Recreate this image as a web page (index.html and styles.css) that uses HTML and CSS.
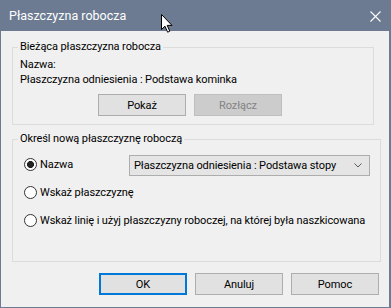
FILE: index.html
```html
<!DOCTYPE html>
<html lang="pl">

<head>
  <meta charset="UTF-8">
  <title>Płaszczyzna robocza</title>
  <link rel="stylesheet" href="styles.css">
</head>

<body>
  <div class="window">
    <div class="titlebar">
      <span class="title">Płaszczyzna robocza</span>
      <svg class="close" viewBox="0 0 11 11" fill="none" stroke="#fff" stroke-width="1.1">
        <path d="M0.5 0.5l10 10M10.5 0.5l-10 10" /></svg>
    </div>

    <div class="content">
      <fieldset class="group group-current">
        <legend>Bieżąca płaszczyzna robocza</legend>
        <div class="info">Nazwa:</div>
        <div class="info">Płaszczyzna odniesienia : Podstawa kominka</div>
        <div class="group-buttons">
          <button class="btn">Pokaż</button>
          <button class="btn" disabled>Rozłącz</button>
        </div>
      </fieldset>

      <fieldset class="group group-new">
        <legend>Określ nową płaszczyznę roboczą</legend>
        <div class="option-row">
          <label class="option"><input type="radio" name="mode" class="radio" checked>Nazwa</label>
          <div class="combo">
            <span>Płaszczyzna odniesienia : Podstawa stopy</span>
            <svg viewBox="0 0 8 5" fill="none" stroke="#5a5a5a" stroke-width="1">
              <path d="M0.5 0.5l3.5 3.5 3.5-3.5" /></svg>
          </div>
        </div>
        <div class="option-row">
          <label class="option"><input type="radio" name="mode" class="radio">Wskaż płaszczyznę</label>
        </div>
        <div class="option-row">
          <label class="option"><input type="radio" name="mode" class="radio">Wskaż linię i użyj płaszczyzny roboczej, na której była naszkicowana</label>
        </div>
      </fieldset>

      <div class="dialog-buttons">
        <button class="btn default">OK</button>
        <button class="btn">Anuluj</button>
        <button class="btn">Pomoc</button>
      </div>
    </div>

    <svg class="cursor" viewBox="0 0 12 19">
      <path d="M0.5 0.5v15l3.5-3.3 2.6 6 2.2-1-2.6-5.8h4.8z" fill="#fff" stroke="#000" stroke-width="1"
        stroke-linejoin="round" /></svg>
  </div>
</body>

</html>
```

FILE: styles.css
```css
* {
  box-sizing: border-box;
  margin: 0;
  padding: 0;
  font-family: Roboto, "Liberation Sans", sans-serif
}

:root {
  --frame: #6c7b92;
  --face: #f0f0f0;
  --line: #dcdcdc;
  --btn: #e1e1e1;
  --btn-border: #adadad;
  --accent: #0078d7
}

body {
  width: 391px;
  height: 308px;
  background: var(--frame);
  overflow: hidden
}

.window {
  position: relative;
  width: 390px;
  height: 308px;
  border: 1px solid var(--frame);
  background: var(--face);
  display: flex;
  flex-direction: column;
  font-size: 11px;
  letter-spacing: -0.1px;
  color: #000
}

.titlebar {
  height: 30px;
  flex: none;
  background: var(--frame);
  color: #fff;
  display: flex;
  align-items: center;
  padding: 0 8px 0 8px
}

.title {
  font-size: 12.5px;
  letter-spacing: 0;
  margin-top: -1px
}

.close {
  width: 11px;
  height: 11px;
  margin-left: auto;
  margin-top: 1px
}

.content {
  display: flex;
  flex-direction: column;
  padding-top: 8px
}

.group {
  min-width: 0;
  border: 1px solid var(--line);
  margin-left: 11px;
  padding: 2px 10px 8px 7px
}

.group legend {
  line-height: 16px;
  padding: 0 2px;
  margin-left: -2px
}

.group-current {
  width: 362px
}

.group-new {
  width: 369px;
  margin-top: 6px;
  padding-top: 6px;
  padding-bottom: 30px;
  display: flex;
  flex-direction: column;
  gap: 6px
}

.info {
  line-height: 15px
}

.group-buttons {
  display: flex;
  gap: 8px;
  margin-top: 7px;
  padding-left: 78px
}

.btn {
  width: 88px;
  height: 22px;
  background: var(--btn);
  border: 1px solid var(--btn-border);
  font-size: 11px;
  letter-spacing: -0.1px;
  color: #000
}

.btn:disabled {
  background: #cccccc;
  border-color: #bfbfbf;
  color: #838383
}

.btn.default {
  border: 2px solid var(--accent)
}

.option-row {
  height: 22px;
  display: flex;
  align-items: center
}

.option {
  display: flex;
  align-items: center;
  gap: 3px;
  white-space: nowrap
}

.radio {
  appearance: none;
  flex: none;
  width: 13px;
  height: 13px;
  margin-left: 4px;
  border: 1px solid #333;
  border-radius: 50%;
  background: #fff
}

.radio:checked {
  background: radial-gradient(circle, #222 0 3.2px, #fff 3.8px)
}

.combo {
  width: 241px;
  height: 21px;
  margin-left: auto;
  margin-top: 2px;
  align-self: flex-start;
  background: #e5e5e5;
  border: 1px solid var(--btn-border);
  display: flex;
  align-items: center;
  padding: 0 7px 0 4px
}

.combo svg {
  width: 8px;
  height: 5px;
  margin-left: auto
}

.dialog-buttons {
  display: flex;
  justify-content: flex-end;
  gap: 8px;
  margin-top: 11px;
  padding-right: 10px
}

.cursor {
  position: absolute;
  left: 160px;
  top: 13px;
  width: 12px;
  height: 19px
}
```
